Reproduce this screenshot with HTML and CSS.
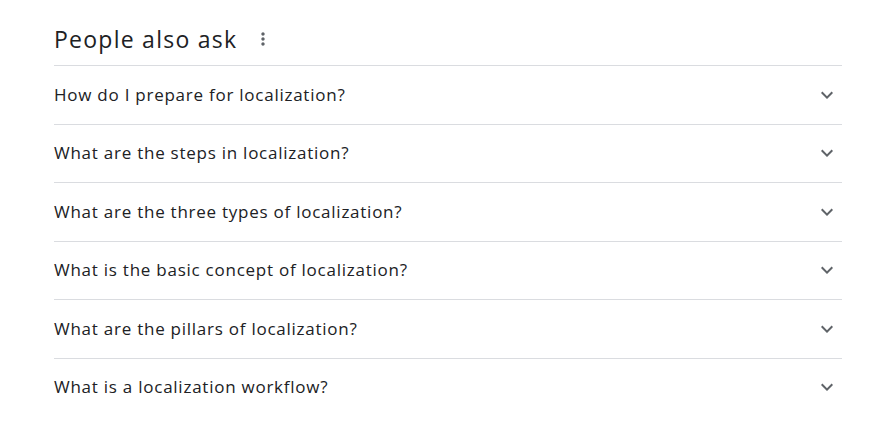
FILE: index.html
```html
<!DOCTYPE html>
<html>
<head>
<meta charset="utf-8">
<link rel="stylesheet" href="styles.css">
</head>
<body>
<div class="paa">
  <div class="head">
    <h2 class="title">People also ask</h2>
    <svg class="more" viewBox="0 0 24 24" width="20" height="20"><path d="M12 8c1.1 0 2-.9 2-2s-.9-2-2-2-2 .9-2 2 .9 2 2 2zm0 2c-1.1 0-2 .9-2 2s.9 2 2 2 2-.9 2-2-.9-2-2-2zm0 6c-1.1 0-2 .9-2 2s.9 2 2 2 2-.9 2-2-.9-2-2-2z"/></svg>
  </div>
  <div class="list">
    <div class="row"><span class="q">How do I prepare for localization?</span><svg class="chev" viewBox="0 0 24 24" width="24" height="24"><path d="M16.59 8.59L12 13.17 7.41 8.59 6 10l6 6 6-6z"/></svg></div>
    <div class="row"><span class="q">What are the steps in localization?</span><svg class="chev" viewBox="0 0 24 24" width="24" height="24"><path d="M16.59 8.59L12 13.17 7.41 8.59 6 10l6 6 6-6z"/></svg></div>
    <div class="row"><span class="q">What are the three types of localization?</span><svg class="chev" viewBox="0 0 24 24" width="24" height="24"><path d="M16.59 8.59L12 13.17 7.41 8.59 6 10l6 6 6-6z"/></svg></div>
    <div class="row"><span class="q">What is the basic concept of localization?</span><svg class="chev" viewBox="0 0 24 24" width="24" height="24"><path d="M16.59 8.59L12 13.17 7.41 8.59 6 10l6 6 6-6z"/></svg></div>
    <div class="row"><span class="q">What are the pillars of localization?</span><svg class="chev" viewBox="0 0 24 24" width="24" height="24"><path d="M16.59 8.59L12 13.17 7.41 8.59 6 10l6 6 6-6z"/></svg></div>
    <div class="row"><span class="q">What is a localization workflow?</span><svg class="chev" viewBox="0 0 24 24" width="24" height="24"><path d="M16.59 8.59L12 13.17 7.41 8.59 6 10l6 6 6-6z"/></svg></div>
  </div>
</div>
</body>
</html>
```
FILE: styles.css
```css
html, body {
  margin: 0;
  padding: 0;
  background: #fff;
}
body {
  font-family: "Open Sans", Roboto, Arial, sans-serif;
  color: #202124;
}
.paa {
  width: 788px;
  margin-left: 54px;
}
.head {
  display: flex;
  align-items: center;
  height: 65px;
  padding-top: 13px;
  box-sizing: border-box;
}
.title {
  margin: 0;
  font-size: 23px;
  font-weight: 400;
  line-height: 28px;
  letter-spacing: 1.25px;
}
.more {
  fill: #5f6368;
  margin-left: 16px;
}
.row {
  display: flex;
  align-items: center;
  justify-content: space-between;
  height: 58.5px;
  border-top: 1px solid #dadce0;
  box-sizing: border-box;
}
.q {
  font-size: 17px;
  line-height: 24px;
  letter-spacing: 0.75px;
}
.chev {
  fill: #5f6368;
  margin-right: 3px;
}
```
